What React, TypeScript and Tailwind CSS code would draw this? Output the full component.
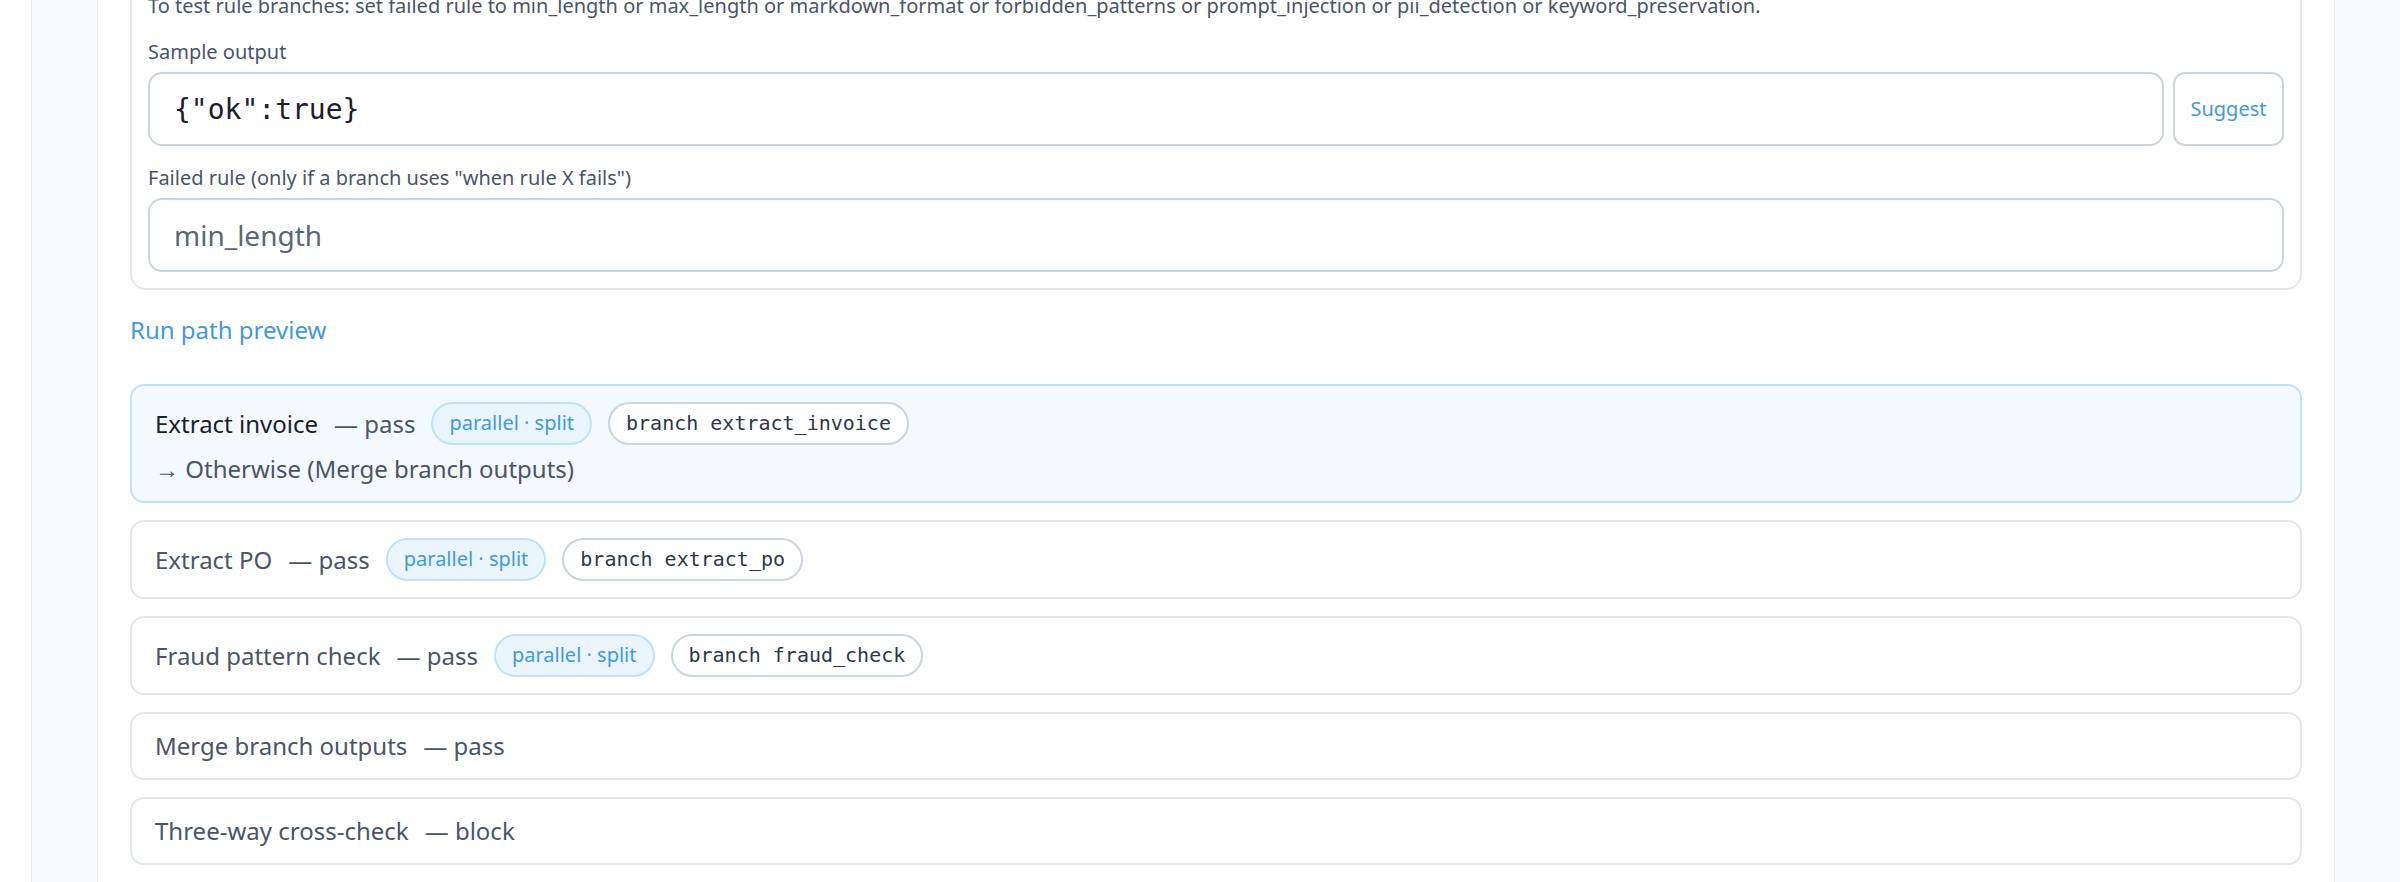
import React from "react";

type Step = {
  name: string;
  result: string;
  parallel?: boolean;
  branch?: string;
  next?: string;
  active?: boolean;
};

const steps: Step[] = [
  {
    name: "Extract invoice",
    result: "pass",
    parallel: true,
    branch: "extract_invoice",
    next: "Otherwise (Merge branch outputs)",
    active: true,
  },
  { name: "Extract PO", result: "pass", parallel: true, branch: "extract_po" },
  { name: "Fraud pattern check", result: "pass", parallel: true, branch: "fraud_check" },
  { name: "Merge branch outputs", result: "pass" },
  { name: "Three-way cross-check", result: "block" },
  { name: "Manager approval", result: "skipped" },
];

const StepCard = ({ step }: { step: Step }) => {
  return (
    <div
      className={
        step.active
          ? "rounded-[14px] border-2 border-[#bee3f8] bg-[#f4f9fe] px-[23px] py-4"
          : "rounded-[14px] border-2 border-[#e2e8f0] bg-white px-[23px] py-4"
      }
    >
      <div className="flex items-center gap-4 text-2xl">
        <span className={step.active ? "text-[#1a202c]" : "text-[#4a5568]"}>{step.name}</span>
        <span className="text-[#4a5568]">— {step.result}</span>
        {step.parallel && (
          <span className="flex h-[43px] items-center rounded-full border-2 border-[#bee3f8] bg-[#ebf5fd] px-4 text-[20px] text-[#4299e1]">
            parallel · split
          </span>
        )}
        {step.branch && (
          <span className="flex h-[43px] items-center rounded-full border-2 border-[#cbd5e0] bg-white px-4 font-['DejaVu_Sans_Mono',monospace] text-[20px] text-[#2d3748]">
            branch {step.branch}
          </span>
        )}
      </div>
      {step.next && <div className="mt-2 text-2xl text-[#4a5568]">→ {step.next}</div>}
    </div>
  );
};

export default function App() {
  return (
    <div className="flex h-screen overflow-hidden bg-white font-['Noto_Sans',sans-serif]">
      {/* left rails */}
      <div className="w-[31px] shrink-0 bg-white" />
      <div className="w-[67px] shrink-0 border-x border-[#e2e8f0] bg-[#f7fafc]" />

      {/* main column */}
      <main className="flex-1 border-r border-[#e2e8f0] bg-white px-8">
        {/* test inputs */}
        <div className="-mt-[27px] rounded-2xl border-2 border-[#e2e8f0] p-4">
          <p className="text-[20px] leading-[30px] text-[#4a5568]">
            To test rule branches: set failed rule to min_length or max_length or markdown_format or
            forbidden_patterns or prompt_injection or pii_detection or keyword_preservation.
          </p>

          <label className="mt-4 mb-[5px] block text-[20px] leading-[30px] text-[#4a5568]">Sample output</label>
          <div className="flex gap-[9px]">
            <input
              readOnly
              value={'{"ok":true}'}
              className="h-[74px] flex-1 rounded-[14px] border-2 border-[#cbd5e0] bg-white px-6 font-['DejaVu_Sans_Mono',monospace] text-[28px] text-[#1a202c] outline-none"
            />
            <button className="h-[74px] w-[111px] rounded-[12px] border-2 border-[#cbd5e0] bg-white text-[20px] text-[#4299e1]">
              Suggest
            </button>
          </div>

          <label className="mt-[17px] mb-[5px] block text-[20px] leading-[30px] text-[#4a5568]">
            Failed rule (only if a branch uses "when rule X fails")
          </label>
          <input
            readOnly
            value="min_length"
            className="block h-[74px] w-full rounded-[14px] border-2 border-[#cbd5e0] bg-white px-6 text-[28px] text-[#5a677a] outline-none"
          />
        </div>

        <button className="mt-6 mb-[38px] block text-2xl text-[#4299e1]">Run path preview</button>

        {/* run path */}
        <div className="flex flex-col gap-[17px]">
          {steps.map((s) => (
            <StepCard key={s.name} step={s} />
          ))}
        </div>
      </main>

      <div className="w-[65px] shrink-0 bg-[#f7fafc]" />
    </div>
  );
}
